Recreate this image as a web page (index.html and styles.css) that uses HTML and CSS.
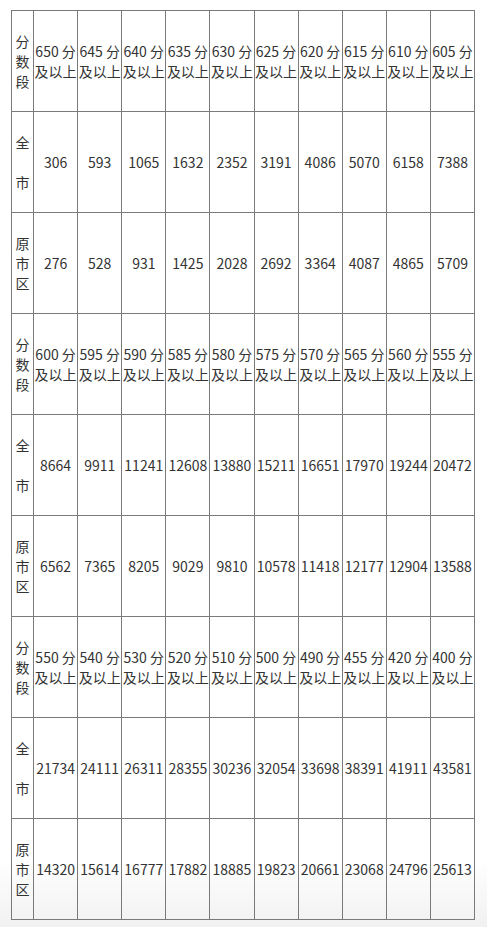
FILE: index.html
```html
<!DOCTYPE html>
<html lang="zh">
<head>
<meta charset="utf-8">
<title>分数段</title>
<link rel="stylesheet" href="styles.css">
</head>
<body>
<table class="score-table">
<colgroup>
<col class="c-head">
<col class="c-data"><col class="c-data"><col class="c-data"><col class="c-data"><col class="c-data">
<col class="c-data"><col class="c-data"><col class="c-data"><col class="c-data"><col class="c-data">
</colgroup>
<tbody>
<tr>
<td class="label">分<br>数<br>段</td>
<td>650 分及以上</td><td>645 分及以上</td><td>640 分及以上</td><td>635 分及以上</td><td>630 分及以上</td>
<td>625 分及以上</td><td>620 分及以上</td><td>615 分及以上</td><td>610 分及以上</td><td>605 分及以上</td>
</tr>
<tr>
<td class="label">全<br><br>市</td>
<td>306</td><td>593</td><td>1065</td><td>1632</td><td>2352</td><td>3191</td><td>4086</td><td>5070</td><td>6158</td><td>7388</td>
</tr>
<tr>
<td class="label">原<br>市<br>区</td>
<td>276</td><td>528</td><td>931</td><td>1425</td><td>2028</td><td>2692</td><td>3364</td><td>4087</td><td>4865</td><td>5709</td>
</tr>
<tr>
<td class="label">分<br>数<br>段</td>
<td>600 分及以上</td><td>595 分及以上</td><td>590 分及以上</td><td>585 分及以上</td><td>580 分及以上</td>
<td>575 分及以上</td><td>570 分及以上</td><td>565 分及以上</td><td>560 分及以上</td><td>555 分及以上</td>
</tr>
<tr>
<td class="label">全<br><br>市</td>
<td>8664</td><td>9911</td><td>11241</td><td>12608</td><td>13880</td><td>15211</td><td>16651</td><td>17970</td><td>19244</td><td>20472</td>
</tr>
<tr>
<td class="label">原<br>市<br>区</td>
<td>6562</td><td>7365</td><td>8205</td><td>9029</td><td>9810</td><td>10578</td><td>11418</td><td>12177</td><td>12904</td><td>13588</td>
</tr>
<tr>
<td class="label">分<br>数<br>段</td>
<td>550 分及以上</td><td>540 分及以上</td><td>530 分及以上</td><td>520 分及以上</td><td>510 分及以上</td>
<td>500 分及以上</td><td>490 分及以上</td><td>455 分及以上</td><td>420 分及以上</td><td>400 分及以上</td>
</tr>
<tr>
<td class="label">全<br><br>市</td>
<td>21734</td><td>24111</td><td>26311</td><td>28355</td><td>30236</td><td>32054</td><td>33698</td><td>38391</td><td>41911</td><td>43581</td>
</tr>
<tr>
<td class="label">原<br>市<br>区</td>
<td>14320</td><td>15614</td><td>16777</td><td>17882</td><td>18885</td><td>19823</td><td>20661</td><td>23068</td><td>24796</td><td>25613</td>
</tr>
</tbody>
</table>
</body>
</html>
```
FILE: styles.css
```css
html {
  background: linear-gradient(to bottom, #ffffff 0, #ffffff 860px, #f1f1f1 927px);
  min-height: 927px;
}
body {
  margin: 0;
  padding: 10px 0 0 11px;
  font-family: "Noto Sans CJK SC", "Microsoft YaHei", sans-serif;
  font-size: 14px;
  line-height: 20px;
  color: #333333;
}
.score-table {
  border-collapse: collapse;
  table-layout: fixed;
  width: 464px;
}
.c-head { width: 22px; }
.c-data { width: 44px; }
.score-table td {
  border: 1px solid #7a7a7a;
  height: 101px;
  padding: 0;
  text-align: center;
  vertical-align: middle;
  word-break: break-all;
  box-sizing: border-box;
}
```
